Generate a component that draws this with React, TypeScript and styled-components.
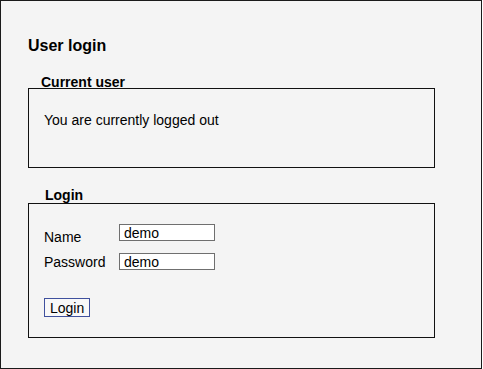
import React from 'react'
import styled, { createGlobalStyle } from 'styled-components'

const GlobalStyle = createGlobalStyle`
  body {
    margin: 0;
    background: #ffffff;
    font-family: 'Liberation Sans', Arial, Helvetica, sans-serif;
    color: #000;
  }
`

/* 外框 */
const Frame = styled.main`
  box-sizing: border-box;
  width: 482px;
  height: 369px;
  padding: 35px 0 0 27px;
  border: 1px solid #1a1a1a;
  background: #f4f4f4;
`

const Title = styled.h1`
  margin: 0 0 20px;
  font-size: 16px;
  line-height: 20px;
  font-weight: bold;
`

const Group = styled.section<{ $top?: number }>`
  margin-top: ${(p) => p.$top ?? 0}px;
  width: 407px;
`

const Legend = styled.h2<{ $indent: number; $under: number }>`
  margin: 0 0 ${(p) => p.$under}px ${(p) => p.$indent}px;
  font-size: 14px;
  line-height: 12px;
  font-weight: bold;
`

const Box = styled.div<{ $pad: string }>`
  box-sizing: border-box;
  border: 1px solid #111;
  padding: ${(p) => p.$pad};
  font-size: 14px;
  line-height: 16px;
`

const Status = styled.p`
  margin: 0;
`

/* 表单行：每行高度固定为输入框高度 */
const FormGrid = styled.div`
  display: grid;
  grid-template-columns: 75px 96px;
  grid-auto-rows: 17px;
  row-gap: 12px;
  align-items: start;
`

const Label = styled.label<{ $drop: number }>`
  margin-top: ${(p) => p.$drop}px;
  line-height: 16px;
  white-space: nowrap;
`

const Field = styled.input`
  box-sizing: border-box;
  width: 96px;
  height: 17px;
  margin: 0;
  padding: 0 4px;
  border: 1px solid #6f6f6f;
  border-radius: 0;
  background: #fff;
  font: 14px/15px 'Liberation Sans', Arial, sans-serif;
  color: #000;
  outline: none;
`

const LoginButton = styled.button`
  box-sizing: border-box;
  display: block;
  height: 19px;
  margin-top: 28px;
  padding: 0 5px;
  border: 1px solid #3f509d;
  border-radius: 0;
  background: #f8f8f8;
  font: 14px/16px 'Liberation Sans', Arial, sans-serif;
  color: #000;
`

const App: React.FC = () => (
  <>
    <GlobalStyle />
    <Frame>
      <Title>User login</Title>

      {/* 当前用户 */}
      <Group>
        <Legend $indent={13} $under={0}>Current user</Legend>
        <Box $pad="23px 15px 39px">
          <Status>You are currently logged out</Status>
        </Box>
      </Group>

      {/* 登录表单 */}
      <Group $top={21}>
        <Legend $indent={17} $under={2}>Login</Legend>
        <Box $pad="20px 15px 20px">
          <FormGrid>
            <Label $drop={5} htmlFor="name">Name</Label>
            <Field id="name" defaultValue="demo" />
            <Label $drop={1} htmlFor="password">Password</Label>
            <Field id="password" defaultValue="demo" />
          </FormGrid>
          <LoginButton type="button">Login</LoginButton>
        </Box>
      </Group>
    </Frame>
  </>
)

export default App
